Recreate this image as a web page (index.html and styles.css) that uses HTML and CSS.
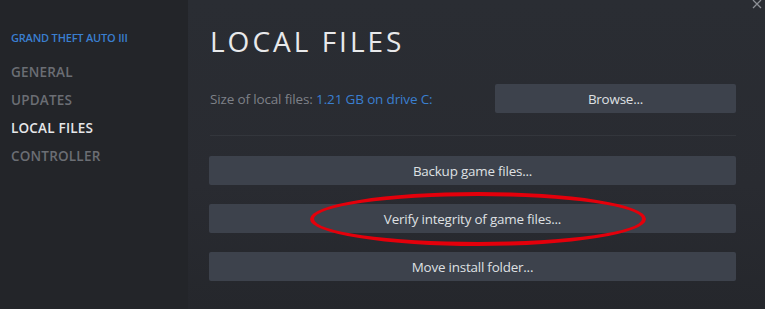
FILE: index.html
```html
<!DOCTYPE html>
<html>
<head>
<meta charset="utf-8">
<link rel="stylesheet" href="styles.css">
</head>
<body>
<div class="window">
  <nav class="sidebar">
    <div class="game-title">GRAND THEFT AUTO III</div>
    <ul class="menu">
      <li class="item">GENERAL</li>
      <li class="item">UPDATES</li>
      <li class="item active">LOCAL FILES</li>
      <li class="item">CONTROLLER</li>
    </ul>
  </nav>
  <main class="content">
    <h1 class="title">LOCAL FILES</h1>
    <div class="size-row">
      <div class="size-text">Size of local files: <span class="size-value">1.21 GB on drive C:</span></div>
      <button class="btn browse">Browse...</button>
    </div>
    <div class="separator"></div>
    <div class="actions">
      <button class="btn">Backup game files...</button>
      <button class="btn verify">Verify integrity of game files...<span class="circle"></span></button>
      <button class="btn">Move install folder...</button>
    </div>
    <svg class="close" width="10" height="9" viewBox="0 0 10 9"><path d="M1 0 L9 8 M9 0 L1 8" stroke="#8d9096" stroke-width="1.3" fill="none"/></svg>
  </main>
</div>
</body>
</html>
```
FILE: styles.css
```css
* { box-sizing: border-box; }
html, body { margin: 0; padding: 0; }
body {
  width: 765px;
  height: 309px;
  overflow: hidden;
  background: #26282e;
  font-family: "Open Sans", "Liberation Sans", sans-serif;
}
.window {
  display: flex;
  height: 309px;
}
.sidebar {
  width: 188px;
  background: #232529;
  padding: 31px 0 0 11px;
}
.game-title {
  color: #3a7fd0;
  font-size: 11px;
  font-weight: 600;
  letter-spacing: -0.2px;
  line-height: 14px;
}
.menu {
  list-style: none;
  margin: 0;
  padding: 0;
  margin-top: 13px;
}
.item {
  color: #6b6e74;
  font-size: 13.5px;
  font-weight: 600;
  line-height: 28px;
  letter-spacing: 0.2px;
}
.item.active { color: #e6e7e9; }
.content {
  position: relative;
  flex: 1;
  background: linear-gradient(180deg, #2a2d33 0%, #292b31 60%, #25272c 100%);
  padding: 22px 29px 0 22px;
}
.title {
  margin: 0;
  color: #e8e9eb;
  font-weight: 400;
  font-size: 28px;
  letter-spacing: 3px;
  line-height: 38px;
}
.size-row {
  display: flex;
  align-items: center;
  justify-content: space-between;
  margin-top: 24px;
}
.size-text {
  color: #7e8188;
  font-size: 13.5px;
  letter-spacing: -0.15px;
}
.size-value { color: #3a7fd0; }
.btn {
  display: block;
  position: relative;
  width: 100%;
  height: 29px;
  border: 0;
  border-radius: 2px;
  background: #3d424c;
  color: #dfe0e3;
  font-family: "Open Sans", "Liberation Sans", sans-serif;
  font-size: 13.4px;
  letter-spacing: -0.2px;
  padding: 0;
}
.btn.browse { width: 241px; }
.separator {
  height: 1px;
  background: #33363c;
  margin-top: 22px;
}
.actions {
  display: flex;
  flex-direction: column;
  gap: 19px;
  margin-top: 20px;
  margin-left: -1px;
}
.circle {
  position: absolute;
  left: 101px;
  top: -12px;
  width: 336px;
  height: 54px;
  border: 4.5px solid #e4000b;
  border-radius: 50%;
}
.close {
  position: absolute;
  right: 3px;
  top: 0;
}
```
